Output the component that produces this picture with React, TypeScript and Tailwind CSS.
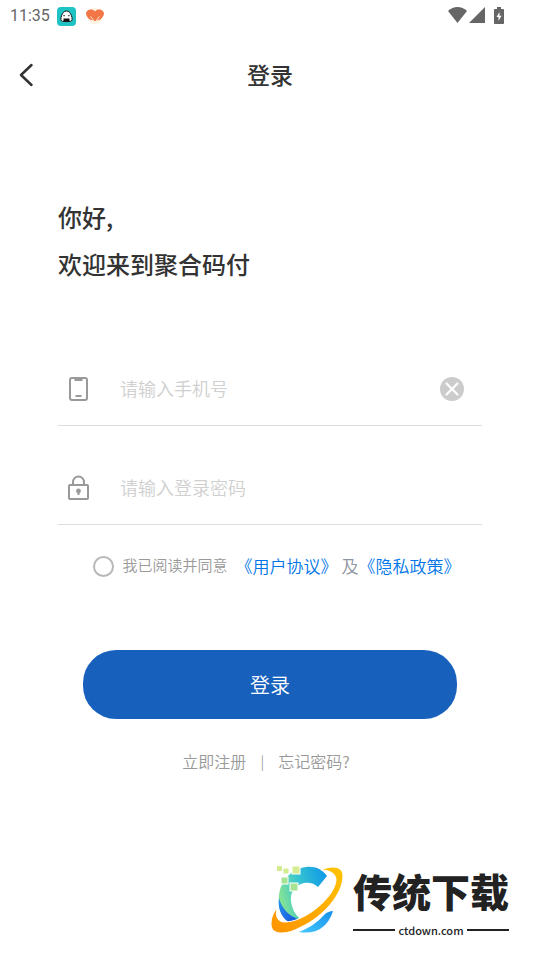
import type { ReactNode } from "react";

function StatusBar() {
  return (
    <div className="flex h-8 items-center justify-between pr-9 pl-2.5 text-[#666]">
      <div className="flex items-center">
        <span className="w-[47px] font-['Roboto',sans-serif] text-base">11:35</span>
        <svg className="h-[19px] w-[19px]" viewBox="0 0 19 19" aria-hidden="true">
          <rect width="19" height="19" rx="4" fill="#1fc3c3" />
          <path d="M9.500 4C12 4 13.300 6 14.400 8.500c1 2.500 1.200 5.800-.9 5.800h-8c-2.100 0-1.900-3.300-.9-5.800C5.700 6 7 4 9.500 4Z" fill="#fff" stroke="#111" strokeWidth="1" />
          <path d="M6.500 11.500h6v3.300h-6zM6.500 8h1.200v1.200H6.500zM11.300 8h1.200v1.200h-1.200z" fill="#111" />
        </svg>
        <svg className="ml-[9px] h-[18px] w-5" viewBox="0 0 20 18" aria-hidden="true">
          <circle cx="10" cy="9" r="8" fill="#fff3e2" />
          <path d="M10 4.500C8 2 4.500 2 2.400 3.800.6 5.300.7 7.600 2 9.500c1 1.600 2.300 2.600 3.400 3.300L10 14l4.600-1.200c1.100-.7 2.400-1.700 3.400-3.300 1.300-1.900 1.400-4.200-.4-5.700C15.500 2 12 2 10 4.500Z" fill="#f47545" />
          <path d="M5.500 9.500 8 12.500l.3 2.500M14.500 9.500 12 12.500l-.3 2.500" fill="none" stroke="#fff3e2" strokeWidth="1" />
        </svg>
      </div>
      <div className="flex items-center pb-0.5" aria-hidden="true">
        <svg className="h-4 w-[19px]" viewBox="0 0 19 16" fill="#666">
          <path d="M9.500 16 0 4C5.500-1.300 13.500-1.300 19 4Z" />
        </svg>
        <svg className="ml-[2px] h-4 w-4" viewBox="0 0 16 16" fill="#666">
          <path d="M16 0v16H0Z" />
        </svg>
        <svg className="ml-[9px] h-[17px] w-[10px]" viewBox="0 0 10 17">
          <path d="M3 0h4v2h2c.6 0 1 .4 1 1v13c0 .6-.4 1-1 1H1c-.6 0-1-.4-1-1V3c0-.6.400-1 1-1h2Z" fill="#666" />
          <path d="M5.500 5 2.500 10h2v4L7.500 8.800h-2Z" fill="#fff" />
        </svg>
      </div>
    </div>
  );
}

function PhoneIcon() {
  return (
    <svg className="h-[26px] w-6" viewBox="0 0 24 26" fill="none" stroke="#999" strokeWidth="2" aria-hidden="true">
      <rect x="4" y="2" width="17" height="22" rx="2" />
      <path d="M8.500 4h8M9.500 20h6" />
    </svg>
  );
}

function LockIcon() {
  return (
    <svg className="h-[26px] w-6" viewBox="0 0 24 26" fill="none" stroke="#999" strokeWidth="2" aria-hidden="true">
      <rect x="3" y="10" width="19" height="14" rx="1" />
      <path d="M7 10V7a5.500 5.500 0 0 1 11 0v3M12.500 16v4" />
      <circle cx="12.500" cy="16" r="2.400" fill="#999" stroke="none" />
    </svg>
  );
}

function Field(props: {
  id: string;
  label: string;
  type: string;
  icon: ReactNode;
  children?: ReactNode;
}) {
  return (
    <div className="flex h-[73px] items-center border-b border-[#ddd] pr-[18px] pl-2">
      <label htmlFor={props.id} aria-label={props.label}>
        {props.icon}
      </label>
      <input
        id={props.id}
        type={props.type}
        placeholder={props.label}
        className="ml-[30px] min-w-0 flex-1 bg-transparent pb-0.5 text-lg font-[350] text-[#333] outline-none placeholder:text-[#d0d0d0]"
      />
      {props.children}
    </div>
  );
}

function SiteLogo() {
  return (
    <svg className="h-[72px] w-[76px]" viewBox="0 0 76 72" aria-hidden="true">
      <defs>
        <linearGradient id="ring" x1="0" y1="1" x2="1" y2="0">
          <stop offset="0" stopColor="#ff9300" />
          <stop offset="1" stopColor="#ffc400" />
        </linearGradient>
        <linearGradient id="arc" x1="0" y1=".6" x2="1" y2=".3">
          <stop offset="0" stopColor="#8ce68e" />
          <stop offset=".45" stopColor="#37c6cf" />
          <stop offset="1" stopColor="#129be8" />
        </linearGradient>
        <linearGradient id="base" x1="0" y1="1" x2="1" y2="0">
          <stop offset="0" stopColor="#46c8ff" />
          <stop offset="1" stopColor="#168fe8" />
        </linearGradient>
        <linearGradient id="blue" x1="0" y1="0" x2="1" y2="1">
          <stop offset="0" stopColor="#2697ee" />
          <stop offset="1" stopColor="#1648d8" />
        </linearGradient>
      </defs>
      {/* open ring */}
      <path d="M9 38C7 20 19 4 36 2c9-1 16 2 21 9L48 22c-4-4-9-5-14-4-9 2-14 9-13 18 1 8 4 13 9 18l-8 4C14 54 9 47 9 38Z" fill="url(#arc)" />
      <path d="M9 33c3 11 10 18 21 22l-8 4C13 55 7 45 9 33Z" fill="url(#blue)" />
      {/* orbit */}
      <path d="M51 5c11-5 22-4 22 6 0 18-20 41-42 51C17 70 1 71 1 59c0-6 2-11 6-16-2 9 1 14 8 14 20 0 50-25 51-42 0-7-7-10-15-10Z" fill="url(#ring)" stroke="#fff" strokeWidth="1" />
      <path d="M63 46C58 62 46 70 29 67c10-4 18-9 25-17 3-3 6-4 9-4Z" fill="url(#base)" />
      <g fill="#d3ec91" stroke="#fff" strokeWidth="1">
        <rect x="7" y="1" width="5" height="5" stroke="none" />
        <rect x="13" y="3" width="6" height="6" />
        <rect x="22" y="1" width="8" height="8" />
        <rect x="11" y="12" width="7" height="7" fill="#a6e494" />
        <rect x="20" y="18" width="8" height="8" fill="#a6e494" />
      </g>
    </svg>
  );
}

export default function App() {
  return (
    <div className="min-h-screen bg-white font-['Noto_Sans_CJK_SC',sans-serif] text-[#333]">
      <StatusBar />
      <header className="grid h-[85px] grid-cols-[1fr_auto_1fr] items-center pl-[18px]">
        <button type="button" aria-label="返回" className="w-4">
          <svg className="h-6 w-4" viewBox="0 0 16 24" fill="none" stroke="#333" strokeWidth="2.500" strokeLinecap="round" strokeLinejoin="round">
            <path d="M13.500 2 3 12l10.500 10" />
          </svg>
        </button>
        <h1 className="-ml-[18px] text-[23px] font-medium">登录</h1>
      </header>

      <main>
        <div className="mt-[76px] px-[58px] text-2xl leading-[47px] font-medium">
          <p>你好,</p>
          <p>欢迎来到聚合码付</p>
        </div>

        <form className="mt-[66px]" onSubmit={(e) => e.preventDefault()}>
          <div className="flex flex-col gap-[26px] px-[58px]">
            <Field id="phone" label="请输入手机号" type="tel" icon={<PhoneIcon />}>
              <button type="reset" aria-label="清空">
                <svg className="h-6 w-6" viewBox="0 0 24 24">
                  <circle cx="12" cy="12" r="12" fill="#ccc" />
                  <path d="m6.500 6.500 11 11m0-11-11 11" stroke="#fff" strokeWidth="2.200" strokeLinecap="round" />
                </svg>
              </button>
            </Field>
            <Field id="password" label="请输入登录密码" type="password" icon={<LockIcon />} />
          </div>

          <div className="mt-[25px] flex h-8 items-center justify-center pl-[14px] text-[17px] font-[350] whitespace-nowrap text-[#8f95a3]">
            <input
              id="agree"
              type="checkbox"
              className="mr-2 h-[21px] w-[21px] appearance-none rounded-full border-2 border-[#b8b8b8] checked:bg-[#1761bd]"
            />
            <label htmlFor="agree" className="mr-2 pb-0.5 text-[15px] text-[#999]">我已阅读并同意</label>
            <a href="#terms" className="mr-1 text-[#0075e8]">《用户协议》</a>
            <span>及</span>
            <a href="#privacy" className="text-[#0075e8]">《隐私政策》</a>
          </div>

          <div className="mt-[68px] px-[83px]">
            <button type="submit" className="h-[69px] w-full rounded-[33px] bg-[#1761bd] text-xl font-[350] text-white">
              登录
            </button>
          </div>
        </form>

        <nav className="mt-[30px] flex items-center justify-center gap-3 pr-2 text-base font-[350] text-[#999]">
          <a href="#register">立即注册</a>
          <span className="w-2 text-center text-sm">|</span>
          <a href="#forgot">忘记密码?</a>
        </nav>
      </main>

      <footer className="mt-[92px] flex justify-end pr-[31px] pb-5 text-[#222]">
        <SiteLogo />
        <div className="ml-[7px]">
          <p className="text-[39px] leading-[50px] font-black">传统下载</p>
          <div className="mt-[7px] flex items-center gap-[3px] text-[11px] leading-4">
            <span className="h-0.5 flex-1 bg-[#222]" />
            <span className="font-['Noto_Sans_CJK_SC',sans-serif] font-medium">ctdown.com</span>
            <span className="h-0.5 flex-1 bg-[#222]" />
          </div>
        </div>
      </footer>
    </div>
  );
}
